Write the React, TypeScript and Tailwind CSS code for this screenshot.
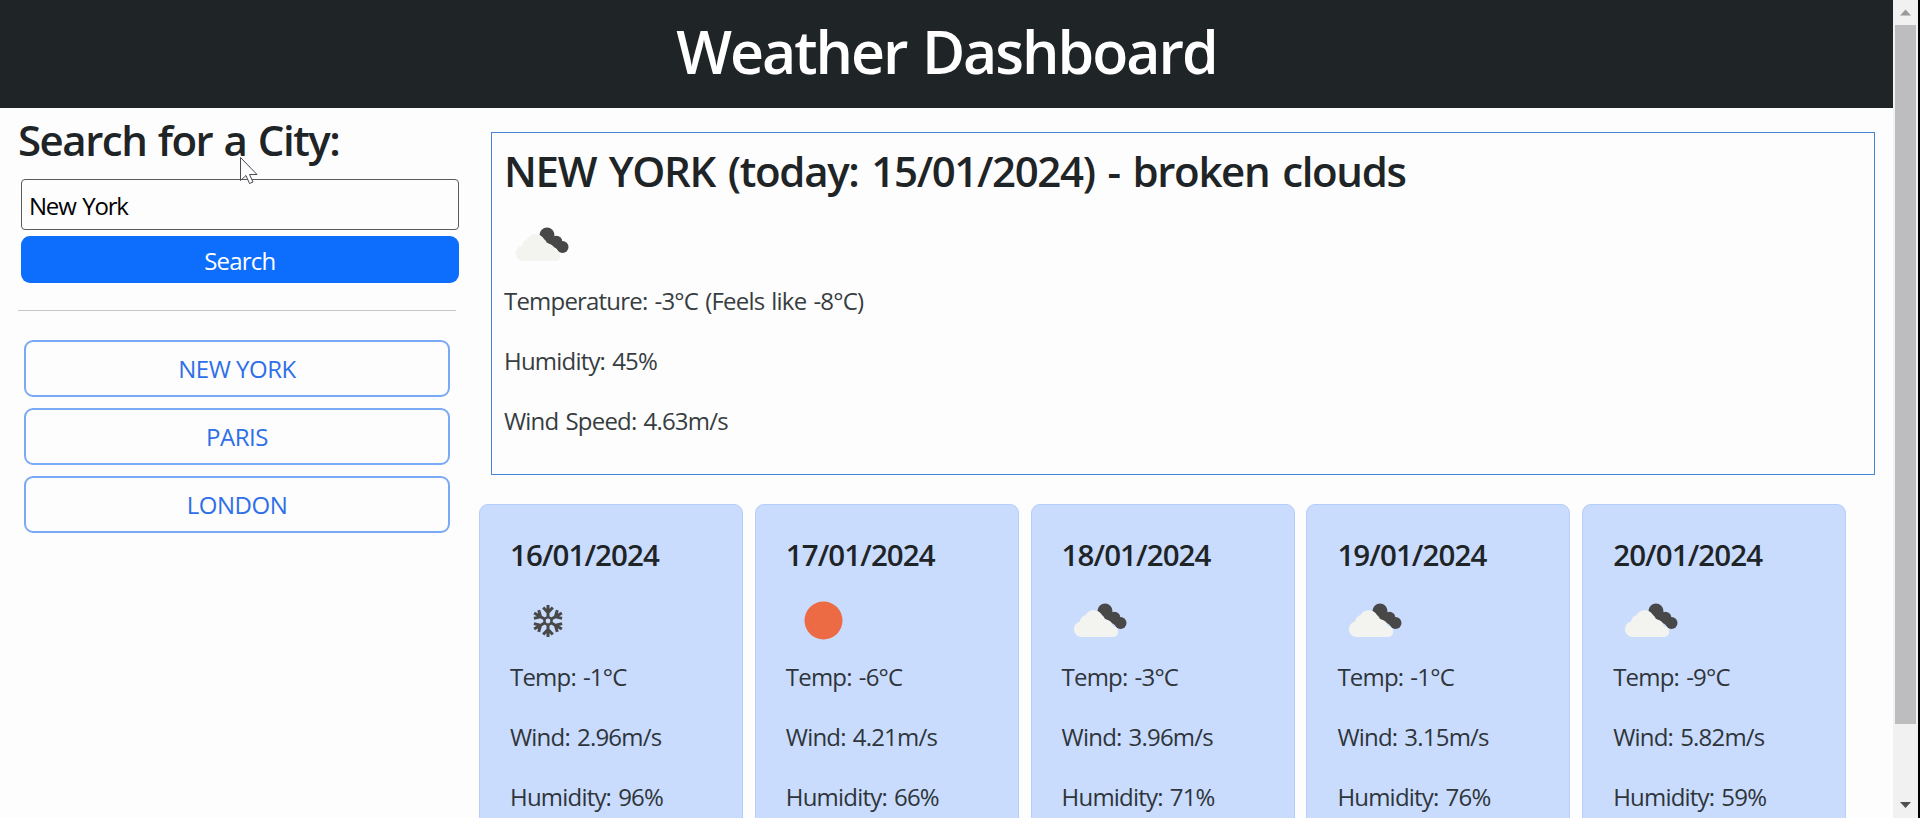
import React from "react";

type IconKind = "clouds" | "snow" | "clear";

interface Day {
  date: string;
  icon: IconKind;
  temp: number;
  wind: string;
  humidity: number;
}

const days: Day[] = [
  { date: "16/01/2024", icon: "snow", temp: -1, wind: "2.96", humidity: 96 },
  { date: "17/01/2024", icon: "clear", temp: -6, wind: "4.21", humidity: 66 },
  { date: "18/01/2024", icon: "clouds", temp: -3, wind: "3.96", humidity: 71 },
  { date: "19/01/2024", icon: "clouds", temp: -1, wind: "3.15", humidity: 76 },
  { date: "20/01/2024", icon: "clouds", temp: -9, wind: "5.82", humidity: 59 },
];

const cities = ["NEW YORK", "PARIS", "LONDON"];

function WeatherIcon({ kind }: { kind: IconKind }) {
  return (
    <svg viewBox="0 0 75 75" className="block h-[75px] w-[75px]">
      {kind === "clouds" && (
        <>
          <g fill="#484848">
            <circle cx="43" cy="28" r="7.500" />
            <circle cx="52.500" cy="34.500" r="5.800" />
            <circle cx="58.500" cy="40" r="6" />
            <path d="M39 33 47 26 55 34 56 44z" />
          </g>
          <path
            fill="#f3f3f0"
            d="M19 54a7.800 7.800 0 0 1-1-15.400 8 8 0 0 1 5.500-6.600 9.500 9.500 0 0 1 16.500 0 7 7 0 0 1 3 4.500 8 8 0 0 1 8 6.500 5.600 5.600 0 0 1 1 11z"
          />
        </>
      )}
      {kind === "clear" && <circle cx="37.500" cy="37.500" r="19" fill="#ec6b45" />}
      {kind === "snow" && (
        <g stroke="#484848" strokeWidth="3" fill="none" transform="translate(38 38)">
          <circle r="3.600" strokeWidth="2.400" />
          {[0, 60, 120, 180, 240, 300].map((angle) => (
            <path key={angle} d="M0-3V-16M-4.800-13.500 0-8.500 4.800-13.500" transform={`rotate(${angle})`} />
          ))}
        </g>
      )}
    </svg>
  );
}

function DayCard({ day }: { day: Day }) {
  return (
    <article className="h-[380px] w-[264px] shrink-0 rounded-[9px] border border-[#b5cdf9] bg-[#c9dcfd] px-[30px] pt-[32px]">
      <h5 className="mb-[10px] text-[29.5px] leading-[36px] font-semibold tracking-[-0.9px]">{day.date}</h5>
      <WeatherIcon kind={day.icon} />
      <div className="mt-px flex flex-col gap-6 text-[24px] leading-[36px] tracking-[-0.8px] text-[#2f353a] [word-spacing:1.6px]">
        <p>Temp: {day.temp}°C</p>
        <p>Wind: {day.wind}m/s</p>
        <p>Humidity: {day.humidity}%</p>
      </div>
    </article>
  );
}

function Scrollbar() {
  return (
    <div className="flex h-full w-[27px] shrink-0 border-r-2 border-black bg-[#f1f1f1]">
      <div className="flex w-full flex-col items-center">
        <svg viewBox="0 0 25 25" className="h-[25px] w-[25px] shrink-0">
          <path d="M7 15.500 12.500 9.500 18 15.500z" fill="#9a9a9a" />
        </svg>
        <div className="h-[699px] w-[21px] shrink-0 bg-[#bdbdbf]" />
        <div className="grow" />
        <svg viewBox="0 0 25 25" className="h-[25px] w-[25px] shrink-0">
          <path d="M7 9 12.500 15 18 9z" fill="#505050" />
        </svg>
      </div>
    </div>
  );
}

export default function App() {
  return (
    <div className="relative flex h-[818px] w-[1920px] overflow-hidden bg-[#fdfdfd] font-['Open_Sans',sans-serif] text-[#1f2427]">
      <div className="flex h-full w-[1893px] shrink-0 flex-col overflow-hidden">
        <header className="flex h-[108px] shrink-0 items-start justify-center bg-[#1f2427] pt-[15px] text-white">
          <h1 className="text-[59px] leading-[72px] font-semibold tracking-[-2px] [word-spacing:2px]">Weather Dashboard</h1>
        </header>
        <div className="flex">
          <aside className="w-[479px] shrink-0 pt-[7px] pl-[18px]">
            <h3 className="mb-[14px] text-[42px] leading-[50px] font-semibold tracking-[-1.5px] [word-spacing:2px]">
              Search for a City:
            </h3>
            <form className="ml-[3px] w-[437.5px]" onSubmit={(e) => e.preventDefault()}>
              <input
                className="block h-[51px] w-full rounded-[4px] border border-[#5a5a5a] bg-transparent pt-[2px] pl-[7px] text-[24px] tracking-[-1.2px] text-black outline-none [word-spacing:1.6px]"
                defaultValue="New York"
              />
              <button className="mt-[6px] block h-[47px] w-full rounded-[9px] bg-[#0d6efd] pt-[2px] text-[24px] tracking-[-0.8px] text-white">
                Search
              </button>
            </form>
            <hr className="mt-[27px] w-[438px] border-[#c6c7c8]" />
            <div className="mt-[29px] ml-[6px] flex w-[426px] flex-col gap-[11px]">
              {cities.map((city) => (
                <button
                  key={city}
                  className="h-[57px] rounded-[9px] border-2 border-[#7aaaf5] pt-px text-[24px] tracking-[-0.5px] text-[#2f6fe8]"
                >
                  {city}
                </button>
              ))}
            </div>
          </aside>
          <main>
            <section className="mt-[24px] ml-[12px] h-[343px] w-[1384px] border border-[#4585d8] px-[12px] pt-[13px]">
              <h3 className="mb-[11px] text-[42px] leading-[50px] font-semibold tracking-[-1.35px] [word-spacing:3.3px]">
                NEW YORK (today: 15/01/2024) - broken clouds
              </h3>
              <WeatherIcon kind="clouds" />
              <div className="mt-px flex flex-col gap-6 text-[24px] leading-[36px] tracking-[-0.8px] text-[#373d41] [word-spacing:1.6px]">
                <p>Temperature: -3°C (Feels like -8°C)</p>
                <p>Humidity: 45%</p>
                <p>Wind Speed: 4.63m/s</p>
              </div>
            </section>
            <section className="mt-[29px] flex gap-[11.8px]">
              {days.map((day) => (
                <DayCard key={day.date} day={day} />
              ))}
            </section>
          </main>
        </div>
      </div>
      <Scrollbar />
      <svg viewBox="0 0 19 28" className="absolute top-[157px] left-[240px] h-[28px] w-[19px]">
        <path
          d="M.5.500V23.500L6 18.500 9.500 26.500 13 25 9.500 17.500H17z"
          fill="white"
          stroke="#4a4a55"
          strokeWidth="1"
        />
      </svg>
    </div>
  );
}
